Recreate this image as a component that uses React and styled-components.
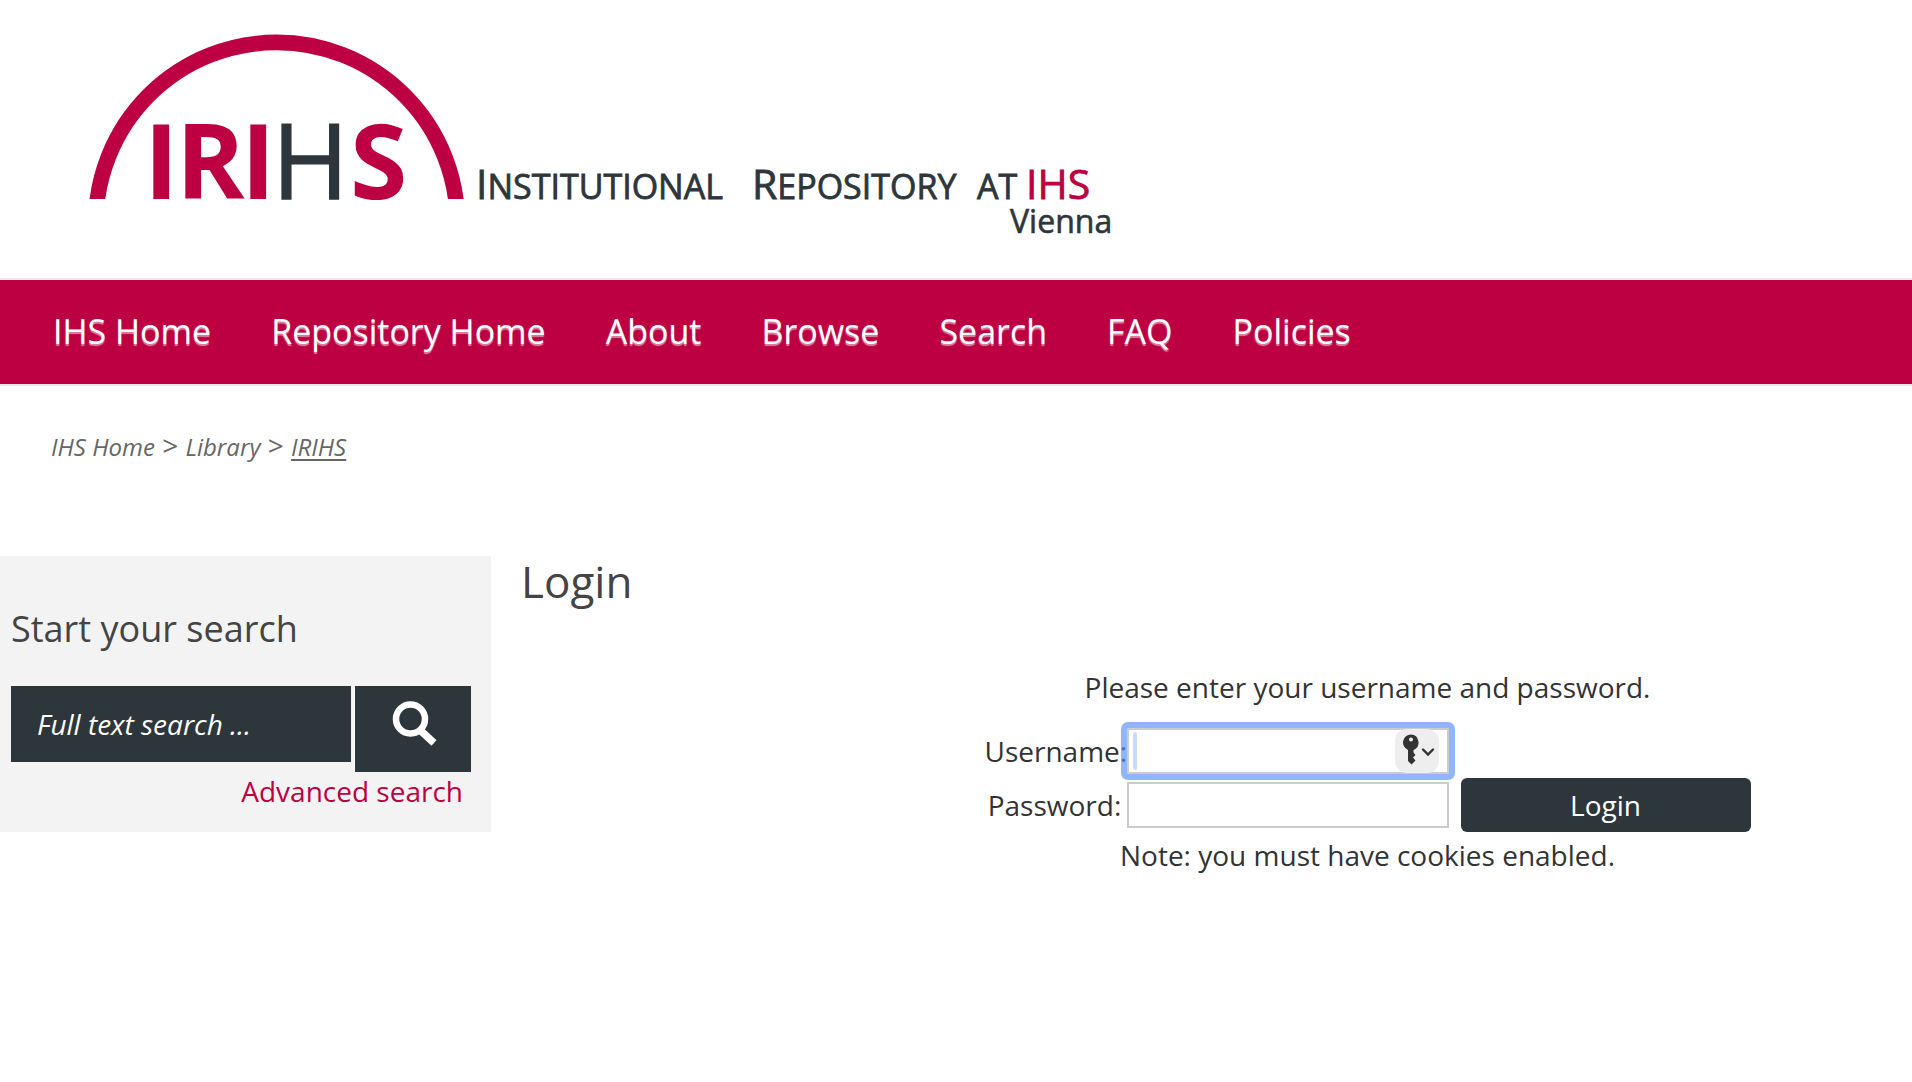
import React, { useState } from 'react';
import styled, { createGlobalStyle } from 'styled-components';

const GlobalStyle = createGlobalStyle`
  * {
    box-sizing: border-box;
  }

  body {
    margin: 0;
    background-color: #fff;
    color: #333;
    font-family: 'Open Sans', 'Noto Sans', sans-serif;
    font-size: 28px;
    line-height: 38px;
  }
`;

const Header = styled.header`
  padding: 24px 80px 14px;
`;

const LogoLink = styled.a`
  display: block;
`;

const Logo = styled.svg`
  display: block;
  width: 1060px;
  height: 240px;
`;

const NavBar = styled.nav`
  display: flex;
  align-items: center;
  gap: 60px;
  padding: 27px 53px 29px;
  background-color: #bd0041;
  border-top: 2px solid #e8e8e8;
  border-bottom: 2px solid #e8e8e8;
`;

const NavLink = styled.a`
  color: #fff;
  font-size: 34px;
  line-height: 48px;
  text-decoration: none;
  text-shadow: 0 2px 1px rgba(255, 255, 255, 0.5);
`;

const Breadcrumb = styled.div`
  padding: 41px 51px 91px;
  color: #666;
  font-size: 28px;
  line-height: 36px;
`;

const Crumb = styled.a`
  color: #666;
  font-size: 24px;
  font-style: italic;
  text-decoration: ${(props) => (props.$current ? 'underline' : 'none')};
  text-decoration-thickness: 2px;
  text-underline-offset: 3px;
`;

const Page = styled.div`
  display: flex;
  align-items: flex-start;
  gap: 30px;
`;

const Sidebar = styled.aside`
  flex: none;
  width: 491px;
  padding: 48px 20px 22px 11px;
  background-color: #f3f3f3;
`;

const SidebarTitle = styled.h2`
  margin: 0 0 32px;
  color: #444;
  font-size: 36px;
  font-weight: 400;
  line-height: 50px;
`;

const SearchForm = styled.form`
  display: flex;
  align-items: flex-start;
  gap: 3px;
`;

const SearchInput = styled.input`
  width: 340px;
  height: 76px;
  padding: 0 26px;
  border: none;
  border-radius: 0;
  background-color: #2d363b;
  color: #fff;
  font: italic 28px 'Open Sans', sans-serif;

  &::placeholder {
    color: #fff;
    opacity: 1;
  }
`;

const SearchButton = styled.button`
  display: flex;
  justify-content: center;
  width: 117px;
  height: 86px;
  padding: 14px 0 0;
  border: none;
  border-left: 1px solid #fff;
  background-color: #2d363b;
`;

const AdvancedLink = styled.a`
  display: block;
  padding-right: 8px;
  color: #bd0041;
  text-align: right;
  text-decoration: none;
`;

const Content = styled.main`
  flex: 1;
`;

const Title = styled.h1`
  margin: 0 0 62px;
  color: #444;
  font-size: 44px;
  font-weight: 400;
  line-height: 50px;
`;

const LoginForm = styled.form`
  display: grid;
  grid-template-columns: 140px 324px 302px;
  justify-content: center;
  align-items: center;
  padding-left: 302px;
`;

const Message = styled.p`
  grid-column: 1 / -1;
  margin: 0;
  padding: ${(props) => (props.$note ? '4px 0 0' : '0 0 18px')};
  text-align: center;
`;

const Label = styled.label`
  grid-column: 1;
  text-align: center;
`;

const Field = styled.div`
  position: relative;
  margin: 4px 0 4px 2px;
`;

const TextInput = styled.input`
  display: block;
  width: 100%;
  height: 46px;
  padding: 0 6px;
  border: 2px solid #ccc;
  border-radius: 0;
  background-color: #fff;
  font: inherit;
  outline: none;
`;

const FocusRing = styled.span`
  position: absolute;
  inset: -6px;
  border: 6px solid rgba(84, 142, 250, 0.65);
  border-radius: 7px;
  pointer-events: none;
`;

const Caret = styled.span`
  position: absolute;
  top: 4px;
  bottom: 4px;
  left: 6px;
  width: 4px;
  border-radius: 2px;
  background-color: #c5dcff;
`;

const KeyButton = styled.button`
  position: absolute;
  top: 1px;
  right: 10px;
  width: 44px;
  height: 44px;
  padding: 0;
  border: none;
  border-radius: 12px;
  background-color: #eee;

  svg {
    display: block;
  }
`;

const SubmitButton = styled.button`
  height: 54px;
  margin-left: 12px;
  border: none;
  border-radius: 6px;
  background-color: #2d363b;
  color: #fff;
  font: inherit;
`;

const navItems = ['IHS Home', 'Repository Home', 'About', 'Browse', 'Search', 'FAQ', 'Policies'];

const IrihsLogo = () => (
  <Logo viewBox="80 24 1060 240" role="img" aria-label="IRIHS">
    <clipPath id="arch">
      <rect x="80" y="24" width="400" height="175" />
    </clipPath>
    <circle
      cx="276.6"
      cy="223.2"
      r="180.8"
      fill="none"
      stroke="#bd0041"
      strokeWidth="15.6"
      clipPath="url(#arch)"
    />
    <g fill="#bd0041" fontFamily="Open Sans" fontSize="104" fontWeight="700">
      <text x="144" y="199">I</text>
      <text x="176" y="199">R</text>
      <text x="241" y="199">I</text>
      <text x="272" y="199" fill="#2d363b" stroke="#2d363b" strokeWidth="1.5" fontWeight="400">H</text>
      <text x="350" y="199">S</text>
    </g>
    <g fill="#2d363b" stroke="#2d363b" strokeWidth="0.8" fontFamily="Open Sans" fontSize="34">
      <text x="476" y="199">
        <tspan fontSize="41">I</tspan>NSTITUTIONAL
      </text>
      <text x="752" y="199">
        <tspan fontSize="41">R</tspan>EPOSITORY
      </text>
      <text x="977" y="199">AT</text>
      <text x="1026" y="199" fill="#bd0041" stroke="#bd0041" fontSize="41">IHS</text>
      <text x="1010" y="233" fontSize="32" strokeWidth="0.6">Vienna</text>
    </g>
  </Logo>
);

const SearchIcon = () => (
  <svg width="48" height="48" viewBox="0 0 48 48" fill="none" stroke="#fff">
    <circle cx="21.5" cy="19" r="14.5" strokeWidth="6.5" />
    <path d="M31 30 L45 43" strokeWidth="7.5" />
  </svg>
);

const KeyIcon = () => (
  <svg width="44" height="44" viewBox="0 0 44 44">
    <path
      fill="#333"
      fillRule="evenodd"
      d="M16 5.5a8 8 0 0 0-3 15.4V32l3.5 3.5 4-4-2.5-3 2.5-2.5-2-2.5v-2.6A8 8 0 0 0 16 5.5Zm0 3a2 2 0 1 1 0 4 2 2 0 0 1 0-4Z"
    />
    <path d="M28 20.5l5 5 5-5" fill="none" stroke="#333" strokeWidth="2.4" strokeLinecap="round" />
  </svg>
);

const App = () => {
  const [query, setQuery] = useState('');
  const [username, setUsername] = useState('');
  const [password, setPassword] = useState('');

  const handleSubmit = (e) => {
    e.preventDefault();
  };

  return (
    <>
      <GlobalStyle />
      <Header>
        <LogoLink href="#">
          <IrihsLogo />
        </LogoLink>
      </Header>
      <NavBar>
        {navItems.map((item) => (
          <NavLink key={item} href="#">{item}</NavLink>
        ))}
      </NavBar>
      <Breadcrumb>
        <Crumb href="#">IHS Home</Crumb> &gt; <Crumb href="#">Library</Crumb> &gt;{' '}
        <Crumb href="#" $current>IRIHS</Crumb>
      </Breadcrumb>
      <Page>
        <Sidebar>
          <SidebarTitle>Start your search</SidebarTitle>
          <SearchForm onSubmit={handleSubmit}>
            <SearchInput
              type="text"
              aria-label="Full text search"
              placeholder="Full text search ..."
              value={query}
              onChange={(e) => setQuery(e.target.value)}
            />
            <SearchButton type="submit" aria-label="Search">
              <SearchIcon />
            </SearchButton>
          </SearchForm>
          <AdvancedLink href="#">Advanced search</AdvancedLink>
        </Sidebar>
        <Content>
          <Title>Login</Title>
          <LoginForm onSubmit={handleSubmit}>
            <Message>Please enter your username and password.</Message>
            <Label htmlFor="username">Username:</Label>
            <Field>
              <TextInput
                id="username"
                type="text"
                value={username}
                onChange={(e) => setUsername(e.target.value)}
              />
              <FocusRing />
              <Caret />
              <KeyButton type="button" aria-label="Saved passwords">
                <KeyIcon />
              </KeyButton>
            </Field>
            <Label htmlFor="password">Password:</Label>
            <Field>
              <TextInput
                id="password"
                type="password"
                value={password}
                onChange={(e) => setPassword(e.target.value)}
              />
            </Field>
            <SubmitButton type="submit">Login</SubmitButton>
            <Message $note>Note: you must have cookies enabled.</Message>
          </LoginForm>
        </Content>
      </Page>
    </>
  );
};

export default App;
